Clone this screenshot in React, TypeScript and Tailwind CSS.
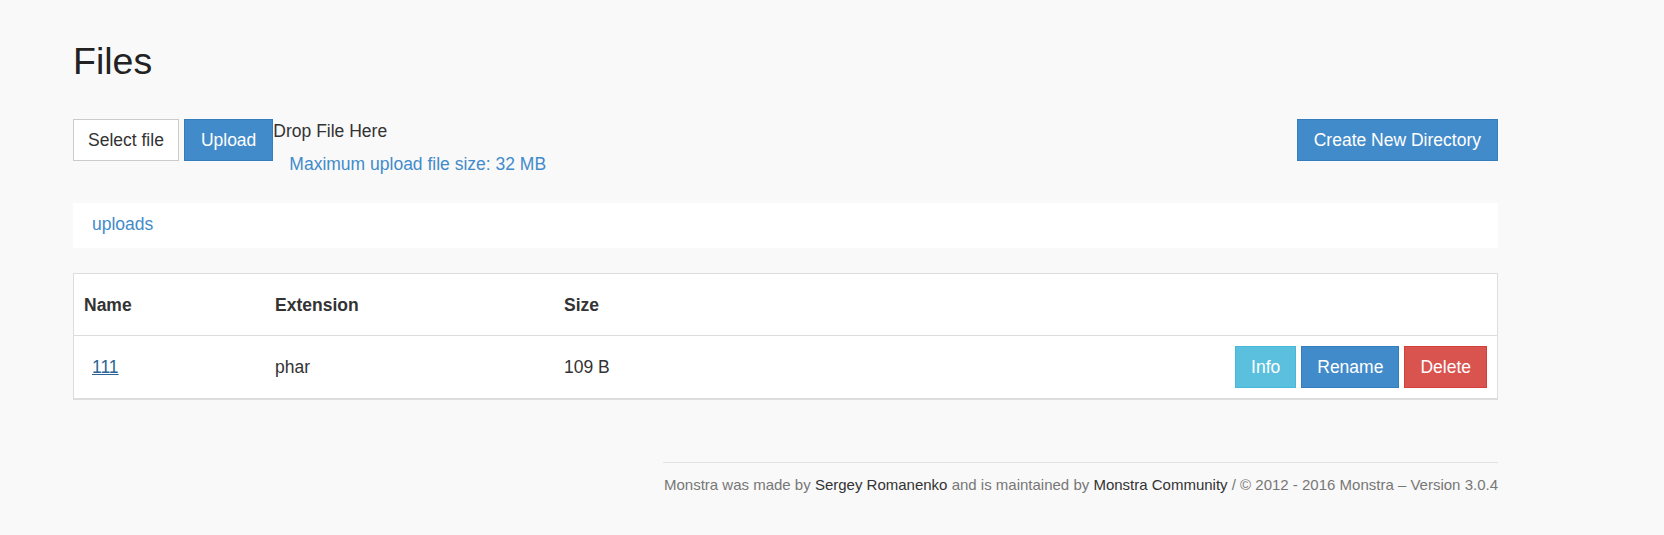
import React from 'react';

const files = [{ name: '111', ext: 'phar', size: '109 B' }];

function Btn({ children, className }: { children: React.ReactNode; className: string }) {
  return (
    <button className={`inline-flex h-[42px] items-center border text-[17.5px] leading-[24px] ${className}`}>
      {children}
    </button>
  );
}

export default function App() {
  return (
    <div
      className="min-h-[535px] bg-[#f9f9f9] pt-[41px] text-[#333]"
      style={{ fontFamily: '"Liberation Sans", Arial, sans-serif' }}
    >
      <div className="ml-[73px] w-[1425px]">
        <h1 className="text-[37.5px] leading-[40px] text-[#222]">Files</h1>

        {/* upload bar */}
        <div className="mt-[38px] flex items-start justify-between">
          <div className="flex items-start">
            <Btn className="h-[41px] border-[#ccc] bg-white px-[14px] text-[#333]">Select file</Btn>
            <Btn className="ml-[5px] h-[41px] border-[#357ebd] bg-[#428bca] px-4 text-white">Upload</Btn>
            <div className="text-[17.5px] leading-[24px]">
              <div>Drop File Here</div>
              <div className="mt-[9px] pl-4 text-[#428bca]">Maximum upload file size: 32 MB</div>
            </div>
          </div>
          <Btn className="border-[#357ebd] bg-[#428bca] px-4 text-white">Create New Directory</Btn>
        </div>

        {/* breadcrumb */}
        <div className="mt-[27px] h-[45px] bg-white pl-[19px] pt-[9px] text-[17.5px] leading-[24px]">
          <a className="text-[#428bca]">uploads</a>
        </div>

        {/* file table */}
        <div className="mt-[25px] border border-b-2 border-[#ddd] bg-white text-[17.5px] leading-[24px]">
          <div className="flex h-[62px] items-center border-b border-[#ddd] font-bold">
            <div className="w-[191px] pl-[10px]">Name</div>
            <div className="w-[289px] pl-[10px]">Extension</div>
            <div className="flex-1 pl-[10px]">Size</div>
          </div>
          {files.map((f) => (
            <div key={f.name} className="flex h-[62px] items-center">
              <div className="w-[191px] pl-[10px]">
                <a className="ml-2 text-[#2a6496] underline">{f.name}</a>
              </div>
              <div className="w-[289px] pl-[10px]">{f.ext}</div>
              <div className="flex-1 pl-[10px]">{f.size}</div>
              <div className="flex gap-[5px] pr-[10px]">
                <Btn className="border-[#46b8da] bg-[#5bc0de] px-[15px] text-white">Info</Btn>
                <Btn className="border-[#357ebd] bg-[#428bca] px-[15px] text-white">Rename</Btn>
                <Btn className="border-[#d43f3a] bg-[#d9534f] px-[15px] text-white">Delete</Btn>
              </div>
            </div>
          ))}
        </div>

        {/* footer */}
        <div className="ml-auto mt-[62px] w-[835px] border-t border-[#e3e3e3] pt-[11px] text-right text-[15px] leading-[21px] text-[#777]">
          Monstra was made by <a className="text-[#333]">Sergey Romanenko</a> and is maintained by{' '}
          <a className="text-[#333]">Monstra Community</a> / © 2012 - 2016 Monstra – Version 3.0.4
        </div>
      </div>
    </div>
  );
}
